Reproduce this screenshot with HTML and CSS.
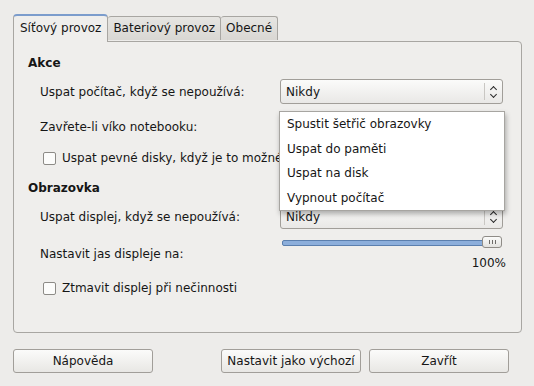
FILE: index.html
```html
<!DOCTYPE html>
<html>
<head>
  <meta charset="utf-8">
  <title>Předvolby správy napájení</title>
  <link rel="stylesheet" href="styles.css">
</head>
<body>
  <div class="window">
    <div class="tabs">
      <div class="tab active">Síťový provoz</div>
      <div class="tab">Bateriový provoz</div>
      <div class="tab">Obecné</div>
    </div>

    <div class="panel">
      <div class="heading">Akce</div>

      <div class="row">
        <span class="label">Uspat počítač, když se nepoužívá:</span>
        <div class="combo"><span>Nikdy</span><span class="arrows"></span></div>
      </div>

      <div class="row second">
        <span class="label">Zavřete-li víko notebooku:</span>
        <!-- covered by the open menu -->
        <div class="combo"><span></span><span class="arrows"></span></div>
      </div>

      <label class="check">
        <span class="box"></span>
        Uspat pevné disky, když je to možné
      </label>

      <div class="heading">Obrazovka</div>

      <div class="row">
        <span class="label">Uspat displej, když se nepoužívá:</span>
        <div class="combo"><span>Nikdy</span><span class="arrows"></span></div>
      </div>

      <div class="row bright">
        <span class="label">Nastavit jas displeje na:</span>
        <div class="scale">
          <div class="track"><span class="thumb"></span></div>
          <div class="value">100%</div>
        </div>
      </div>

      <label class="check">
        <span class="box"></span>
        Ztmavit displej při nečinnosti
      </label>
    </div>

    <div class="buttons">
      <button>Nápověda</button>
      <span class="spacer"></span>
      <button>Nastavit jako výchozí</button>
      <button>Zavřít</button>
    </div>

    <!-- popup of the lid combo, open -->
    <ul class="menu">
      <li>Spustit šetřič obrazovky</li>
      <li>Uspat do paměti</li>
      <li>Uspat na disk</li>
      <li>Vypnout počítač</li>
    </ul>
  </div>
</body>
</html>
```

FILE: styles.css
```css
html {
  background: #edecea;
}
body {
  margin: 0;
  font-family: "DejaVu Sans", sans-serif;
  font-size: 12px;
  color: #161616;
}

.window {
  position: relative;
  width: 534px;
  height: 386px;
  padding: 13px 12px 0 13px;
  box-sizing: border-box;
}

/* TABS */
.tabs {
  display: flex;
  align-items: flex-end;
  height: 28px;
  position: relative;
  z-index: 1;
}
.tab {
  height: 23px;
  line-height: 23px;
  padding: 0 5px;
  white-space: nowrap;
  border: 1px solid #a8a6a2;
  border-bottom: none;
  border-left: none;
  border-radius: 3px 3px 0 0;
  background: linear-gradient(#e6e5e2, #d9d7d3);
  margin-bottom: 1px;
}
.tab.active {
  height: 28px;
  line-height: 24px;
  padding: 0 6px;
  border-left: 1px solid #a8a6a2;
  border-top: 2px solid #7b9ccc;
  border-radius: 4px 4px 0 0;
  background: #efeeec;
  margin-bottom: -1px;
  box-sizing: border-box;
}

/* NOTEBOOK PAGE */
.panel {
  height: 292px;
  box-sizing: border-box;
  border: 1px solid #a8a6a2;
  border-radius: 0 4px 4px 4px;
  background: #efeeec;
  padding: 12px 18px 0 14px;
}

.heading {
  font-weight: bold;
  height: 18px;
  line-height: 18px;
}
.check + .heading {
  margin-top: 12px;
}

.row {
  display: flex;
  align-items: center;
  height: 25px;
  margin-top: 7px;
  padding-left: 12px;
}
.row.second {
  margin-top: 10px;
}
.label {
  width: 240px;
}

.combo {
  flex: 1;
  height: 25px;
  box-sizing: border-box;
  border: 1px solid #a19e99;
  border-radius: 3px;
  background: linear-gradient(#fbfbfa, #e9e8e6);
  display: flex;
  align-items: center;
  padding-left: 5px;
}
.combo span:first-child {
  flex: 1;
}
.arrows {
  width: 17px;
  height: 17px;
  border-left: 1px solid #c9c7c3;
  position: relative;
}
.arrows:before,
.arrows:after {
  content: "";
  position: absolute;
  left: 6px;
  width: 4px;
  height: 4px;
  border-left: 1.5px solid #2b2b2b;
  border-top: 1.5px solid #2b2b2b;
}
.arrows:before {
  top: 4px;
  transform: rotate(45deg);
}
.arrows:after {
  top: 9px;
  transform: rotate(225deg);
}

/* CHECKBOXES */
.check {
  display: flex;
  align-items: center;
  height: 18px;
  margin-top: 10px;
  padding-left: 15px;
}
.row.bright + .check {
  margin-top: 7px;
}
.box {
  width: 11px;
  height: 11px;
  border: 1px solid #8d8b87;
  border-radius: 2px;
  background: #fcfcfb;
  margin-right: 6px;
}

/* BRIGHTNESS SCALE */
.row.bright {
  height: 36px;
  align-items: center;
}
.scale {
  flex: 1;
  display: flex;
  flex-direction: column;
  padding-left: 2px;
  padding-right: 1px;
}
.track {
  position: relative;
  height: 4px;
  margin-top: 1px;
  border: 1px solid #5b7fae;
  border-radius: 2px;
  background: #8caedb;
}
.thumb {
  position: absolute;
  right: -1px;
  top: -5px;
  width: 18px;
  height: 10px;
  border: 1px solid #8f8c87;
  border-radius: 3px;
  background: linear-gradient(#fbfbfa, #e3e2df);
}
.thumb:before {
  content: "";
  position: absolute;
  left: 6px;
  top: 3px;
  width: 5px;
  height: 4px;
  border-left: 1px solid #6e6c68;
  border-right: 1px solid #6e6c68;
}
.thumb:after {
  content: "";
  position: absolute;
  left: 9px;
  top: 3px;
  width: 1px;
  height: 4px;
  background: #6e6c68;
}
.value {
  text-align: right;
  margin-top: 10px;
  margin-right: -4px;
}

/* DIALOG BUTTONS */
.buttons {
  display: flex;
  gap: 8px;
  margin-top: 16px;
  padding-right: 13px;
}
.spacer {
  flex: 1;
}
button {
  width: 140px;
  height: 24px;
  font-family: "DejaVu Sans", sans-serif;
  font-size: 12px;
  color: #161616;
  border: 1px solid #a19e99;
  border-radius: 3px;
  background: linear-gradient(#fbfbfa, #e8e7e4);
  padding: 0;
}

/* OPEN COMBO MENU */
.menu {
  position: absolute;
  left: 279px;
  top: 111px;
  width: 226px;
  margin: 0;
  padding: 0;
  list-style: none;
  box-sizing: border-box;
  background: #ffffff;
  border: 1px solid #a7a5a1;
  box-shadow: 1px 3px 5px rgba(0, 0, 0, 0.3);
  z-index: 5;
}
.menu li {
  height: 24.5px;
  line-height: 24.5px;
  padding-left: 7px;
}
```
